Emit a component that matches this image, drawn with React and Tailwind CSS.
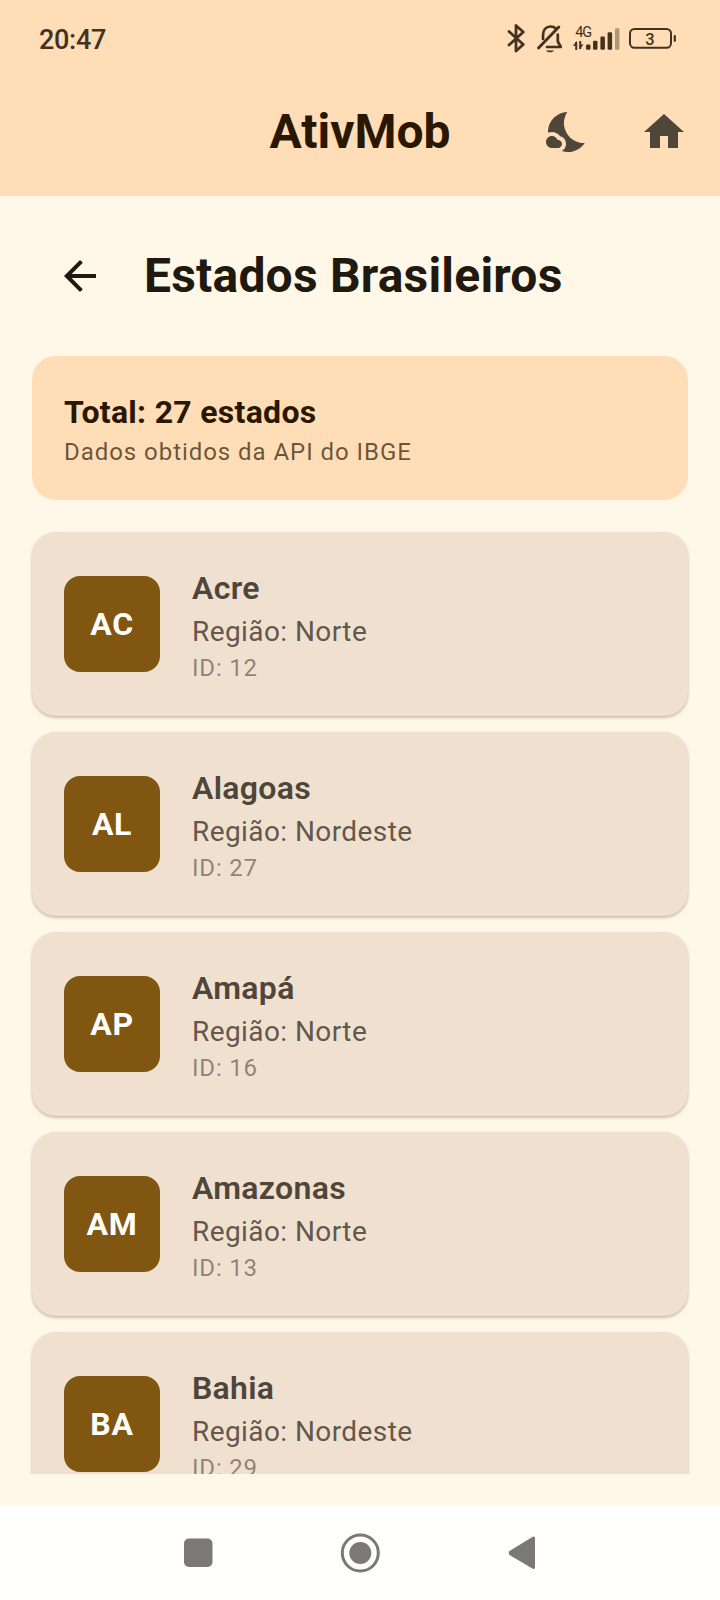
import { MdArrowBack, MdHome, MdNightsStay } from "react-icons/md";

const states = [
  { uf: "AC", name: "Acre", region: "Norte", id: 12 },
  { uf: "AL", name: "Alagoas", region: "Nordeste", id: 27 },
  { uf: "AP", name: "Amapá", region: "Norte", id: 16 },
  { uf: "AM", name: "Amazonas", region: "Norte", id: 13 },
  { uf: "BA", name: "Bahia", region: "Nordeste", id: 29 },
];

function StatusIcons() {
  return (
    <svg width="180" height="36" viewBox="0 0 180 36" fill="none" stroke="#43321f" role="img" aria-label="Status">
      {/* bluetooth */}
      <path d="M9 11.5 L23.3 24.5 L16 31 V5.5 L23.3 12 L9 25" strokeWidth="2.8" strokeLinejoin="round" strokeLinecap="round" />
      {/* muted bell */}
      <path d="M43 19 V15.5 C43 10 46 6.5 50.5 6.5 C52.8 6.5 54.6 7.2 56 8.6 M57.8 14.5 V21.5 L60.8 27 H47" strokeWidth="2.7" strokeLinejoin="round" strokeLinecap="round" />
      <path d="M38.5 28 L58.8 7" strokeWidth="2.9" strokeLinecap="round" />
      <path d="M46 30.4 H54 C53 32.8 47 32.8 46 30.4Z" fill="#43321f" stroke="none" />
      {/* data arrows */}
      <path d="M76.2 22 V30 M80.2 21 V29" strokeWidth="2" />
      <path d="M72.8 25.8 L76.8 21 V25.8Z M83.6 24.6 L79.6 29.6 V24.6Z" fill="#43321f" stroke="none" />
      {/* signal */}
      <g fill="#43321f" stroke="none">
        <rect x="86" y="24.6" width="4.5" height="5.2" rx="1.2" />
        <rect x="93" y="20.8" width="4.5" height="9" rx="1.2" />
        <rect x="100.4" y="16.6" width="4.5" height="13.2" rx="1.2" />
        <rect x="107.6" y="12.2" width="4.5" height="17.6" rx="1.2" />
        <rect x="115" y="8.2" width="4.4" height="21.6" rx="1.2" opacity=".42" />
      </g>
      <text x="75.2" y="17" fontSize="14.5" fontFamily="Roboto, sans-serif" fill="#43321f" stroke="none" textLength="17">4G</text>
      {/* battery */}
      <rect x="130" y="9" width="41" height="18.8" rx="4.5" strokeWidth="2" />
      <path d="M174.8 16 V20.8" strokeWidth="2.2" strokeLinecap="round" />
      <text x="150" y="25" fontSize="16.5" textAnchor="middle" fontFamily="Roboto, sans-serif" fontWeight="500" fill="#43321f" stroke="none">3</text>
    </svg>
  );
}

function StateCard({ uf, name, region, id }) {
  return (
    <article className="flex h-[184px] shrink-0 items-center gap-8 rounded-3xl bg-[#efe0d0] px-8 shadow-[0_2px_3px_rgba(60,40,10,0.2),0_1px_3px_rgba(60,40,10,0.1)]">
      <div className="flex size-24 items-center justify-center rounded-2xl bg-[#805611] text-[32px] leading-none font-bold tracking-[0.7px] text-white">
        {uf}
      </div>
      <div className="text-[#4f4539]">
        <h2 className="text-[32px] leading-[48px] font-semibold tracking-[0.3px]">{name}</h2>
        <p className="text-[28px] leading-[40px] tracking-[0.42px] text-[#4f4539]/90">Região: {region}</p>
        <p className="text-[24px] leading-[32px] tracking-[0.8px] text-[#4f4539]/60">ID: {id}</p>
      </div>
    </article>
  );
}

export default function App() {
  return (
    <div className="flex h-[1600px] w-[720px] flex-col overflow-hidden bg-[#fff7e7] font-['Roboto',sans-serif]">
      <header className="h-[196px] shrink-0 bg-[#ffddb6]">
        <div className="flex h-[68px] items-center justify-between pt-2 pr-10 pl-[39px]">
          <time className="mt-1 text-[27px] leading-none font-medium tracking-[-0.3px] text-[#43321f]">20:47</time>
          <StatusIcons />
        </div>
        <div className="grid h-32 grid-cols-[1fr_auto_1fr] items-center">
          <span />
          <h1 className="text-[48px] leading-[64px] font-bold text-[#2a1700]">AtivMob</h1>
          <div className="flex justify-end gap-12 pr-8 text-[#4f4539]">
            <MdNightsStay size={48} />
            <MdHome size={48} />
          </div>
        </div>
      </header>
      <main className="flex min-h-0 flex-1 flex-col px-8 pb-8">
        <div className="flex h-40 shrink-0 items-center gap-10 pl-6 text-[#20190f]">
          <MdArrowBack size={48} />
          <h2 className="text-[48px] leading-[64px] font-bold tracking-[0.2px]">Estados Brasileiros</h2>
        </div>
        <section className="h-36 shrink-0 rounded-3xl bg-[#ffddb6] p-8 text-[#2a1700]">
          <p className="text-[32px] leading-[48px] font-bold tracking-[0.3px]">Total: 27 estados</p>
          <p className="text-[24px] leading-[32px] tracking-[0.95px] text-[#2a1700]/70">Dados obtidos da API do IBGE</p>
        </section>
        <div className="-mx-8 mt-6 flex min-h-0 flex-1 flex-col gap-4 overflow-hidden px-8 pt-2">
          {states.map((s) => (
            <StateCard key={s.uf} {...s} />
          ))}
        </div>
      </main>
      <nav className="grid h-[94px] shrink-0 place-items-center bg-[#fefefc]">
        <svg width="720" height="94" viewBox="0 0 720 94" fill="#7a7977">
          <rect x="184" y="32.5" width="28.5" height="28.5" rx="5" />
          <circle cx="360.3" cy="47" r="18" fill="none" stroke="#7a7977" strokeWidth="3" />
          <circle cx="360.3" cy="47" r="11" />
          <path d="M510.3 46.2 L533.5 32 V61.5 L510.3 47.6Z" stroke="#7a7977" strokeWidth="3" strokeLinejoin="round" />
        </svg>
      </nav>
    </div>
  );
}
